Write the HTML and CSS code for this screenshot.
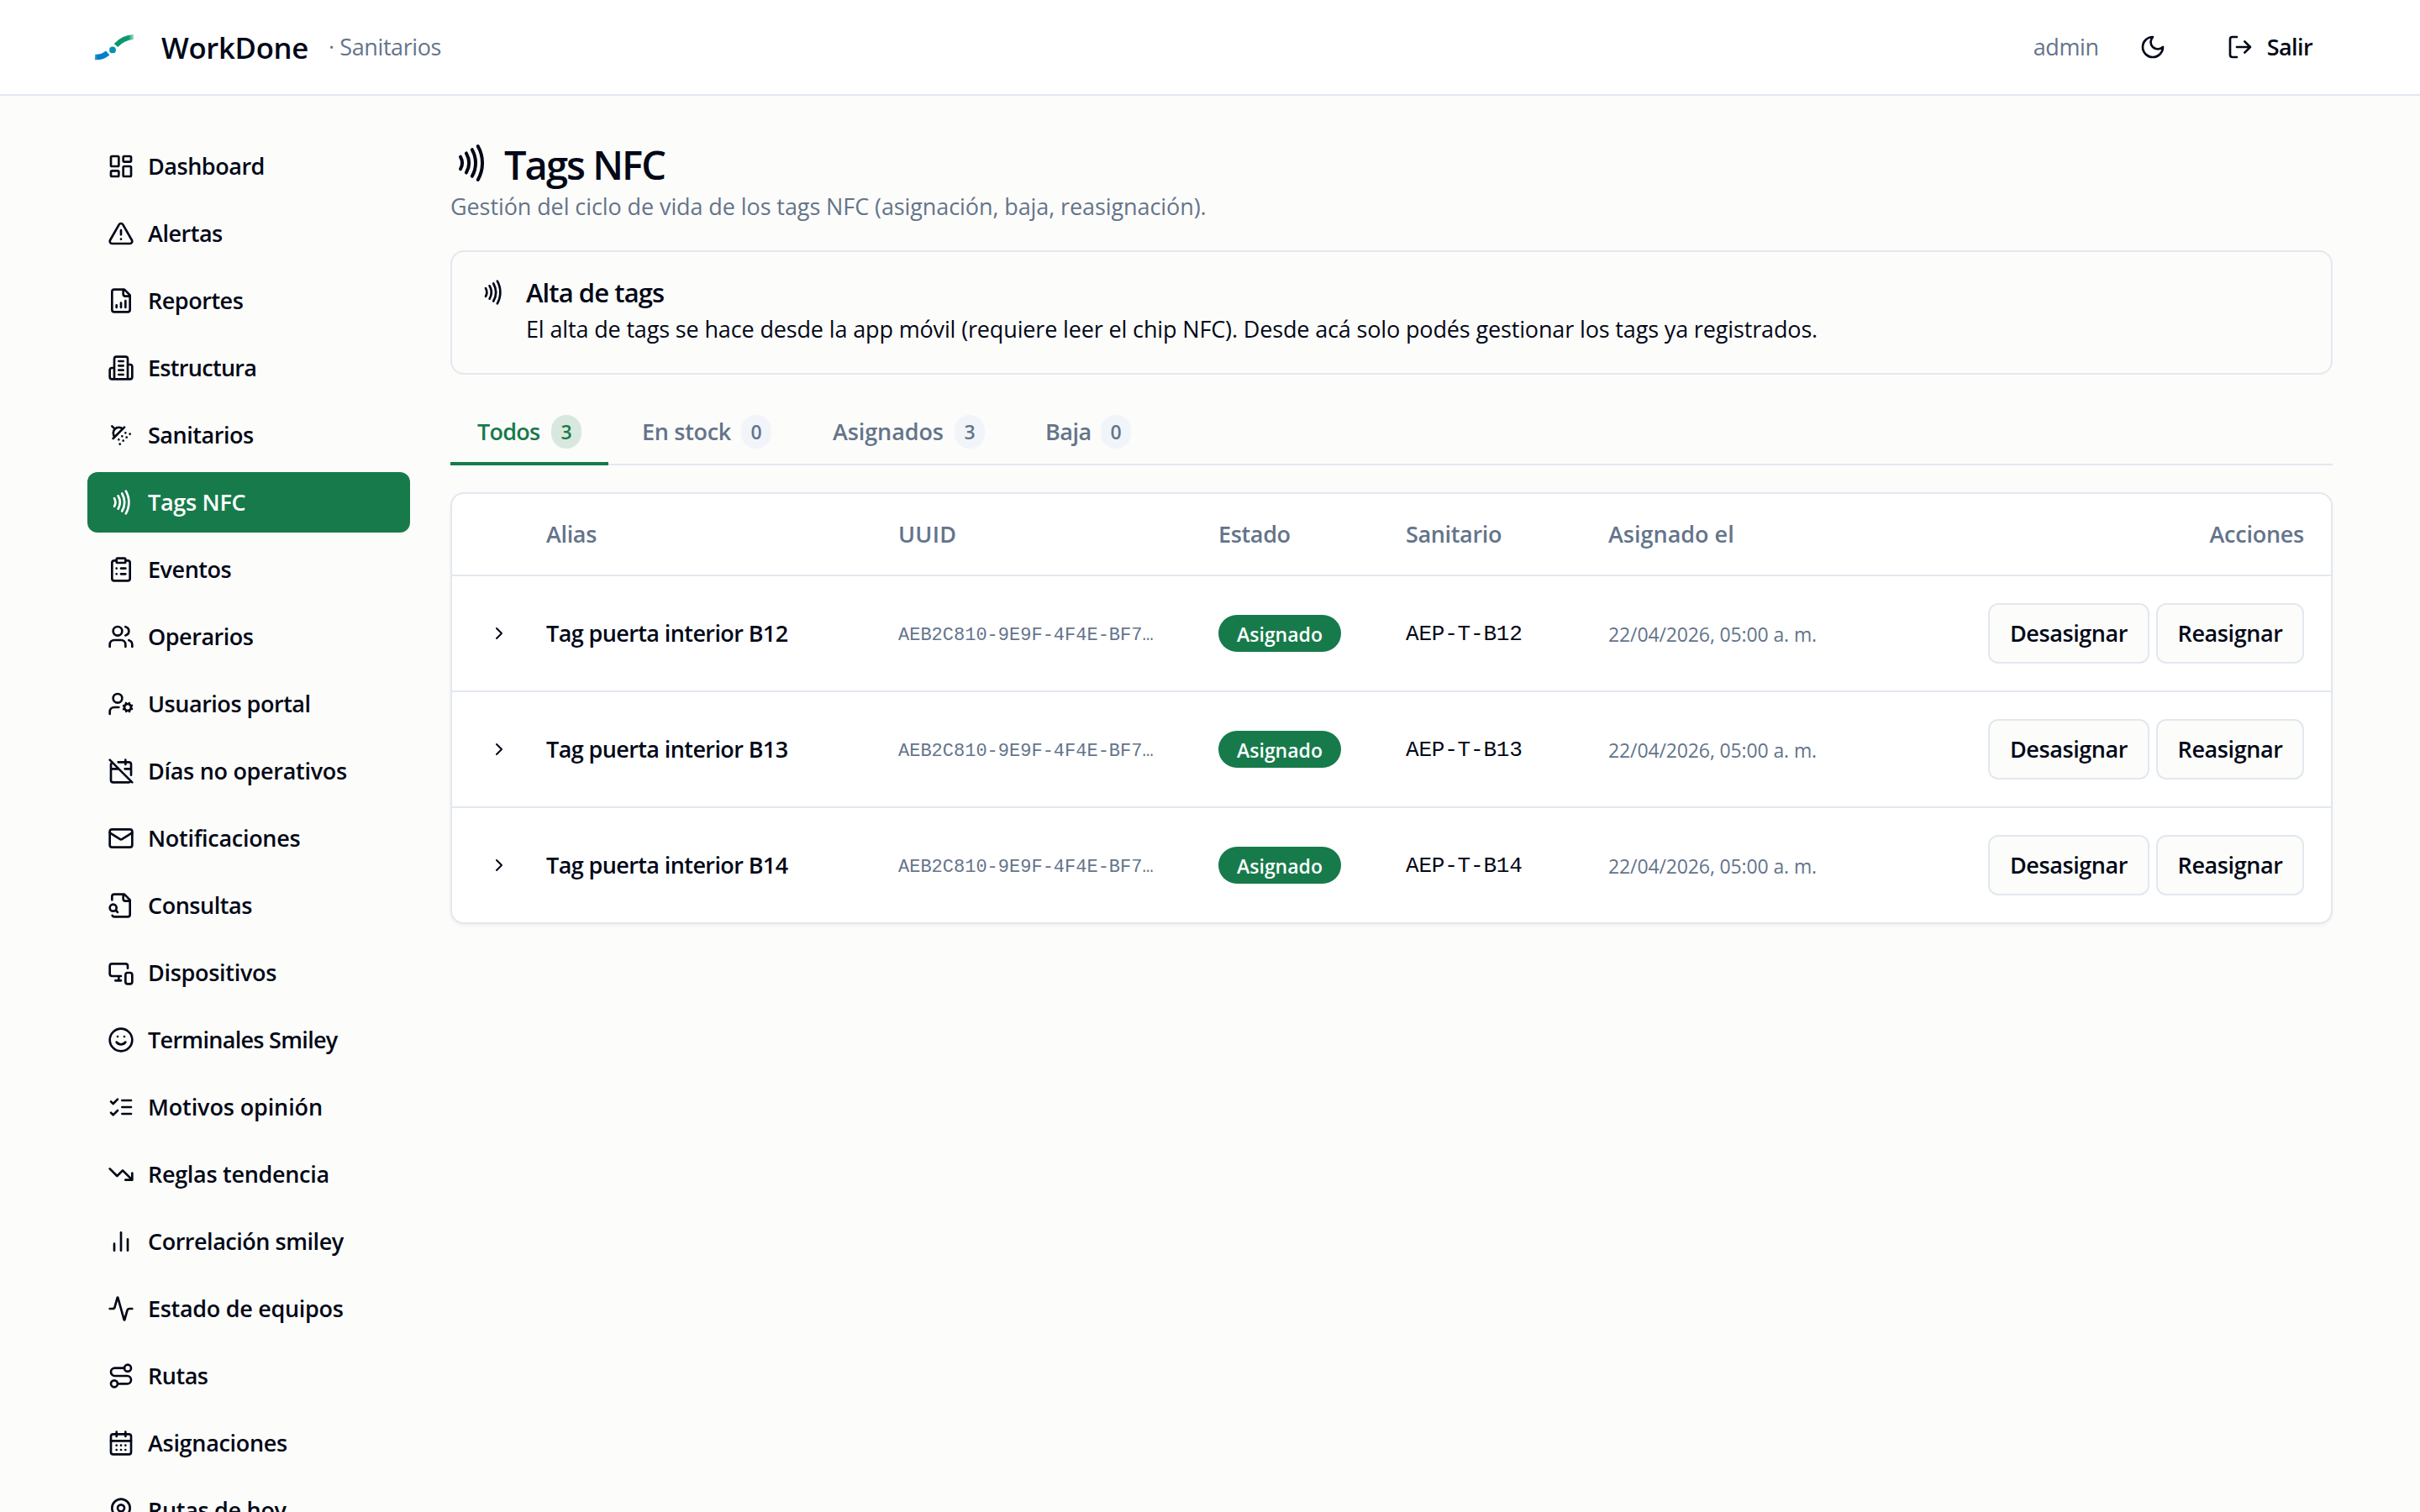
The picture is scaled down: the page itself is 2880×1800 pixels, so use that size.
FILE: index.html
```html
<!DOCTYPE html>
<html lang="es">
<head>
<meta charset="utf-8">
<title>WorkDone · Tags NFC</title>
<link rel="stylesheet" href="styles.css">
</head>
<body>
<svg class="sprite" aria-hidden="true">
  <symbol id="nfc" viewBox="0 0 24 24"><path d="M6 8.32a7.43 7.43 0 0 1 0 7.36M9.46 6.21a11.76 11.76 0 0 1 0 11.58M12.91 4.1a15.91 15.91 0 0 1 .01 15.8M16.37 2a20.16 20.16 0 0 1 0 20"/></symbol>
  <symbol id="chevron" viewBox="0 0 24 24"><path d="m9 18 6-6-6-6"/></symbol>
</svg>

<header class="topbar">
  <div class="brand">
    <svg class="logo" viewBox="0 0 64 48">
      <defs>
        <linearGradient id="fadeGreen" x1="34" y1="0" x2="55" y2="0" gradientUnits="userSpaceOnUse"><stop offset="0" stop-color="#059669"/><stop offset=".72" stop-color="#0c9b70"/><stop offset="1" stop-color="#0c9b70" stop-opacity=".35"/></linearGradient>
        <linearGradient id="fadeBlue" x1="9" y1="0" x2="25" y2="0" gradientUnits="userSpaceOnUse"><stop offset="0" stop-color="#0284c7" stop-opacity=".75"/><stop offset=".2" stop-color="#027cc7"/><stop offset="1" stop-color="#0284c7"/></linearGradient>
      </defs>
      <path d="M9 36Q18 36.500 24.200 31" stroke="url(#fadeBlue)" stroke-width="6.500"/>
      <path d="M34 22Q43 12.500 55 12" stroke="url(#fadeGreen)" stroke-width="6"/>
      <circle cx="30" cy="27.400" r="3.900" fill="#0891b2"/>
    </svg>
    <span class="brand-name">WorkDone</span>
    <span class="brand-sub">· Sanitarios</span>
  </div>
  <div class="session">
    <span class="user">admin</span>
    <button class="icon-button" aria-label="Tema"><svg class="icon" viewBox="0 0 24 24"><path d="M12 3a6 6 0 0 0 9 9 9 9 0 1 1-9-9Z"/></svg></button>
    <button class="logout"><svg class="icon" viewBox="0 0 24 24"><path d="m16 17 5-5-5-5M21 12H9M9 21H5a2 2 0 0 1-2-2V5a2 2 0 0 1 2-2h4"/></svg>Salir</button>
  </div>
</header>

<div class="shell">
  <nav class="sidebar">
    <a class="nav-item"><svg class="icon" viewBox="0 0 24 24"><rect width="7" height="9" x="3" y="3" rx="1"/><rect width="7" height="5" x="14" y="3" rx="1"/><rect width="7" height="9" x="14" y="12" rx="1"/><rect width="7" height="5" x="3" y="16" rx="1"/></svg>Dashboard</a>
    <a class="nav-item"><svg class="icon" viewBox="0 0 24 24"><path d="m21.730 18-8-14a2 2 0 0 0-3.480 0l-8 14A2 2 0 0 0 4 21h16a2 2 0 0 0 1.730-3M12 9v4M12 17h.01"/></svg>Alertas</a>
    <a class="nav-item"><svg class="icon" viewBox="0 0 24 24"><path d="M15 2H6a2 2 0 0 0-2 2v16a2 2 0 0 0 2 2h12a2 2 0 0 0 2-2V7ZM14 2v4a2 2 0 0 0 2 2h4M8 18v-2M12 18v-4M16 18v-6"/></svg>Reportes</a>
    <a class="nav-item tight"><svg class="icon" viewBox="0 0 24 24"><path d="M6 22V4a2 2 0 0 1 2-2h8a2 2 0 0 1 2 2v18ZM6 12H4a2 2 0 0 0-2 2v6a2 2 0 0 0 2 2h2M18 9h2a2 2 0 0 1 2 2v9a2 2 0 0 1-2 2h-2M10 6h4M10 10h4M10 14h4M10 18h4"/></svg>Estructura</a>
    <a class="nav-item"><svg class="icon" viewBox="0 0 24 24"><path d="m4 4 2.500 2.500M13.500 6.500a4.950 4.950 0 0 0-7 7M15 5 5 15M14 17v.01M10 16v.01M13 13v.01M16 10v.01M11 20v.01M17 14v.01M20 11v.01"/></svg>Sanitarios</a>
    <a class="nav-item wide active"><svg class="icon"><use href="#nfc"/></svg>Tags NFC</a>
    <a class="nav-item"><svg class="icon" viewBox="0 0 24 24"><rect width="8" height="4" x="8" y="2" rx="1"/><path d="M16 4h2a2 2 0 0 1 2 2v14a2 2 0 0 1-2 2H6a2 2 0 0 1-2-2V6a2 2 0 0 1 2-2h2M12 11h4M12 16h4M8 11h.01M8 16h.01"/></svg>Eventos</a>
    <a class="nav-item"><svg class="icon" viewBox="0 0 24 24"><path d="M16 21v-2a4 4 0 0 0-4-4H6a4 4 0 0 0-4 4v2M22 21v-2a4 4 0 0 0-3-3.870M16 3.130a4 4 0 0 1 0 7.750"/><circle cx="9" cy="7" r="4"/></svg>Operarios</a>
    <a class="nav-item"><svg class="icon" viewBox="0 0 24 24"><circle cx="18" cy="15" r="3"/><circle cx="9" cy="7" r="4"/><path d="M10 15H6a4 4 0 0 0-4 4v2M21.700 16.400l-.9-.3M15.200 13.900l-.9-.3M16.600 18.700l.3-.9M19.100 12.200l.3-.9M19.600 18.700l-.4-1M16.800 12.300l-.4-1M14.300 16.600l1-.4M20.700 13.800l1-.4"/></svg>Usuarios portal</a>
    <a class="nav-item wide"><svg class="icon" viewBox="0 0 24 24"><path d="M4.200 4.200A2 2 0 0 0 3 6v14a2 2 0 0 0 2 2h14a2 2 0 0 0 1.820-1.180M21 15.500V6a2 2 0 0 0-2-2H9.500M16 2v4M3 10h7M21 10h-5.500M2 2l20 20"/></svg>Días no operativos</a>
    <a class="nav-item wide"><svg class="icon" viewBox="0 0 24 24"><rect width="20" height="16" x="2" y="4" rx="2"/><path d="m22 7-8.970 5.700a1.940 1.940 0 0 1-2.060 0L2 7"/></svg>Notificaciones</a>
    <a class="nav-item"><svg class="icon" viewBox="0 0 24 24"><path d="M14 2v4a2 2 0 0 0 2 2h4M4.268 21a2 2 0 0 0 1.727 1H18a2 2 0 0 0 2-2V7l-5-5H6a2 2 0 0 0-2 2v3M9 18l-1.500-1.500"/><circle cx="5" cy="14" r="3"/></svg>Consultas</a>
    <a class="nav-item wide"><svg class="icon" viewBox="0 0 24 24"><path d="M18 8V6a2 2 0 0 0-2-2H4a2 2 0 0 0-2 2v7a2 2 0 0 0 2 2h8M10 19v-3.960 3.150M7 19h5"/><rect width="6" height="10" x="16" y="12" rx="2"/></svg>Dispositivos</a>
    <a class="nav-item tight"><svg class="icon" viewBox="0 0 24 24"><circle cx="12" cy="12" r="10"/><path d="M8 14s1.500 2 4 2 4-2 4-2M9 9h.01M15 9h.01"/></svg>Terminales Smiley</a>
    <a class="nav-item loose"><svg class="icon" viewBox="0 0 24 24"><path d="m3 17 2 2 4-4M3 7l2 2 4-4M13 6h8M13 12h8M13 18h8"/></svg>Motivos opinión</a>
    <a class="nav-item wide"><svg class="icon" viewBox="0 0 24 24"><path d="M22 17l-8.500-8.500-5 5L2 7M16 17h6v-6"/></svg>Reglas tendencia</a>
    <a class="nav-item"><svg class="icon" viewBox="0 0 24 24"><path d="M18 20V10M12 20V4M6 20v-6"/></svg>Correlación smiley</a>
    <a class="nav-item wide"><svg class="icon" viewBox="0 0 24 24"><path d="M22 12h-2.480a2 2 0 0 0-1.930 1.460l-2.350 8.360a.25.25 0 0 1-.48 0L9.240 2.180a.25.25 0 0 0-.48 0l-2.350 8.360A2 2 0 0 1 4.490 12H2"/></svg>Estado de equipos</a>
    <a class="nav-item"><svg class="icon" viewBox="0 0 24 24"><circle cx="6" cy="19" r="3"/><path d="M9 19h8.500a3.500 3.500 0 0 0 0-7h-11a3.500 3.500 0 0 1 0-7H15"/><circle cx="18" cy="5" r="3"/></svg>Rutas</a>
    <a class="nav-item wide"><svg class="icon" viewBox="0 0 24 24"><path d="M8 2v4M16 2v4M3 10h18M8 14h.01M12 14h.01M16 14h.01M8 18h.01M12 18h.01M16 18h.01"/><rect width="18" height="18" x="3" y="4" rx="2"/></svg>Asignaciones</a>
    <a class="nav-item wide"><svg class="icon" viewBox="0 0 24 24"><path d="M20 10c0 4.993-5.539 10.193-7.399 11.799a1 1 0 0 1-1.202 0C9.539 20.193 4 14.993 4 10a8 8 0 0 1 16 0"/><circle cx="12" cy="10" r="3"/></svg>Rutas de hoy</a>
  </nav>

  <main class="content">
    <div class="page-head">
      <h1 class="title"><svg class="icon title-icon"><use href="#nfc"/></svg><span>Tags NFC</span></h1>
      <p class="subtitle">Gestión del ciclo de vida de los tags NFC (asignación, baja, reasignación).</p>
    </div>

    <section class="notice">
      <svg class="icon"><use href="#nfc"/></svg>
      <div class="notice-body">
        <h2 class="notice-title">Alta de tags</h2>
        <p class="notice-text">El alta de tags se hace desde la app móvil (requiere leer el chip NFC). Desde acá solo podés gestionar los tags ya registrados.</p>
      </div>
    </section>

    <div class="tabs">
      <button class="tab selected t-all"><span>Todos</span><span class="count">3</span></button>
      <button class="tab t-stock"><span>En stock</span><span class="count">0</span></button>
      <button class="tab t-assigned"><span>Asignados</span><span class="count">3</span></button>
      <button class="tab t-off"><span>Baja</span><span class="count">0</span></button>
    </div>

    <section class="table">
      <div class="row head"><span></span><span>Alias</span><span class="uuid-head">UUID</span><span>Estado</span><span>Sanitario</span><span class="date-head">Asignado el</span><span class="end">Acciones</span></div>
      <div class="row"><svg class="icon chevron"><use href="#chevron"/></svg><span class="alias">Tag puerta interior B12</span><span class="uuid">AEB2C810-9E9F-4F4E-BF7…</span><span><span class="badge">Asignado</span></span><span class="code">AEP-T-B12</span><span class="date">22/04/2026, 05:00 a. m.</span><span class="actions"><button class="btn unassign">Desasignar</button><button class="btn reassign">Reasignar</button></span></div>
      <div class="row"><svg class="icon chevron"><use href="#chevron"/></svg><span class="alias">Tag puerta interior B13</span><span class="uuid">AEB2C810-9E9F-4F4E-BF7…</span><span><span class="badge">Asignado</span></span><span class="code">AEP-T-B13</span><span class="date">22/04/2026, 05:00 a. m.</span><span class="actions"><button class="btn unassign">Desasignar</button><button class="btn reassign">Reasignar</button></span></div>
      <div class="row"><svg class="icon chevron"><use href="#chevron"/></svg><span class="alias">Tag puerta interior B14</span><span class="uuid">AEB2C810-9E9F-4F4E-BF7…</span><span><span class="badge">Asignado</span></span><span class="code">AEP-T-B14</span><span class="date">22/04/2026, 05:00 a. m.</span><span class="actions"><button class="btn unassign">Desasignar</button><button class="btn reassign">Reasignar</button></span></div>
    </section>
  </main>
</div>
</body>
</html>
```
FILE: styles.css
```css
:root {
  --bg: #fcfcfa;
  --fg: #020817;
  --muted: #64748b;
  --border: #e2e8f0;
  --primary: #177a4b;
}

* { box-sizing: border-box; margin: 0; padding: 0; }

body {
  height: 1800px;
  overflow: hidden;
  display: flex;
  flex-direction: column;
  background: var(--bg);
  color: var(--fg);
  font-family: "Open Sans", "Noto Sans", sans-serif;
  font-size: 27px;
  line-height: 40px;
}

button { font: inherit; color: inherit; background: none; border: 0; }

.sprite { display: none; }

.icon {
  flex: none;
  width: 32px;
  height: 32px;
  fill: none;
  stroke: currentColor;
  stroke-width: 2;
  stroke-linecap: round;
  stroke-linejoin: round;
}

/* Top bar */
.topbar {
  flex: none;
  height: 114px;
  padding: 0 104px;
  display: flex;
  align-items: center;
  justify-content: space-between;
  background: #fff;
  border-bottom: 2px solid var(--border);
}
.brand, .session { display: flex; align-items: center; }
.logo { width: 64px; height: 48px; fill: none; }
.brand-name {
  width: 199px;
  margin-left: 24px;
  padding-top: 1px;
  font-size: 34.7px;
  font-weight: 560;
  letter-spacing: -.3px;
}
.brand-sub { color: var(--muted); letter-spacing: -.4px; }
.session { gap: 24px; }
.user { color: var(--muted); letter-spacing: -.35px; }
.icon-button { width: 80px; height: 80px; display: grid; place-items: center; }
.logout {
  height: 72px;
  padding: 0 24px;
  display: flex;
  align-items: center;
  gap: 16px;
  font-weight: 560;
  letter-spacing: -.6px;
}

/* Page grid */
.shell {
  flex: none;
  display: grid;
  grid-template-columns: 384px 2240px;
  gap: 48px;
  padding: 48px 104px 0;
}

.sidebar { display: flex; flex-direction: column; gap: 8px; }
.nav-item {
  height: 72px;
  padding: 0 24px;
  display: flex;
  align-items: center;
  gap: 16px;
  border-radius: 12px;
  font-weight: 560;
  letter-spacing: -.47px;
}
.nav-item.tight { letter-spacing: -.7px; }
.nav-item.wide { letter-spacing: -.3px; }
.nav-item.loose { letter-spacing: -.12px; }
.nav-item.active { background: var(--primary); color: #fff; }

/* Heading */
.title {
  height: 64px;
  display: flex;
  align-items: center;
  gap: 16px;
  font-size: 47px;
  font-weight: 560;
  line-height: 64px;
  letter-spacing: -1.95px;
}
.title span { padding-top: 4px; }
.title-icon { width: 48px; height: 48px; }
.subtitle { color: var(--muted); letter-spacing: -.09px; }

/* Notice */
.notice {
  height: 148px;
  margin-top: 32px;
  padding: 32px;
  display: flex;
  gap: 24px;
  border: 2px solid var(--border);
  border-radius: 16px;
}
.notice-title {
  margin-bottom: 8px;
  font-size: 31px;
  font-weight: 560;
  line-height: 32px;
  letter-spacing: -.92px;
}
.notice-text { letter-spacing: -.145px; }

/* Tabs */
.tabs {
  height: 76px;
  margin-top: 32px;
  display: flex;
  gap: 8px;
  box-shadow: inset 0 -2px var(--border);
}
.tab {
  padding: 0 32px;
  display: flex;
  align-items: center;
  justify-content: space-between;
  border-bottom: 4px solid transparent;
  color: var(--muted);
  font-weight: 560;
}
.t-all { width: 188px; letter-spacing: -.75px; }
.t-stock { width: 218px; letter-spacing: -.3px; }
.t-assigned { width: 246px; padding-left: 33px; letter-spacing: -.1px; }
.t-off { width: 166px; letter-spacing: -.5px; }
.tab.selected { color: var(--primary); border-color: var(--primary); }
.count {
  width: 36px;
  height: 40px;
  border-radius: 20px;
  background: #f1f5f9;
  font-size: 23px;
  text-align: center;
  letter-spacing: 0;
}
.selected .count { background: rgba(23, 122, 75, .15); }

/* Table */
.table {
  margin-top: 32px;
  background: #fff;
  border: 2px solid var(--border);
  border-radius: 16px;
  box-shadow: 0 2px 4px rgba(0, 0, 0, .05);
}
.row {
  height: 138px;
  padding: 0 32px;
  display: grid;
  grid-template-columns: 80px 419px 381px 223px 241px 1fr 376px;
  align-items: center;
  border-bottom: 2px solid var(--border);
}
.row:last-child { height: 136px; border-bottom: 0; }
.row.head { height: 98px; color: var(--muted); font-weight: 560; letter-spacing: -.35px; }
.row .uuid-head { letter-spacing: .3px; }
.row .date-head { letter-spacing: 0; }
.end { text-align: right; letter-spacing: -.25px; }
.chevron { width: 24px; height: 24px; margin-left: 12px; }
.alias { font-weight: 560; letter-spacing: -.6px; }
.uuid, .code { font-family: "Liberation Mono", monospace; white-space: nowrap; }
.uuid { padding-top: 5px; color: var(--muted); font-size: 22px; }
.code { padding-top: 2px; font-size: 26px; letter-spacing: -.2px; }
.badge {
  width: 146px;
  height: 44px;
  padding-top: 1px;
  display: block;
  border-radius: 22px;
  background: var(--primary);
  color: #fff;
  font-size: 23px;
  font-weight: 600;
  line-height: 44px;
  text-align: center;
}
.date { padding-top: 2px; color: var(--muted); font-size: 23px; letter-spacing: -.12px; white-space: nowrap; }
.actions { display: flex; justify-content: flex-end; gap: 8px; }
.btn {
  height: 72px;
  border: 2px solid var(--border);
  border-radius: 12px;
  background: var(--bg);
  font-weight: 560;
  letter-spacing: -.42px;
}
.unassign { width: 192px; }
.reassign { width: 176px; }
```
